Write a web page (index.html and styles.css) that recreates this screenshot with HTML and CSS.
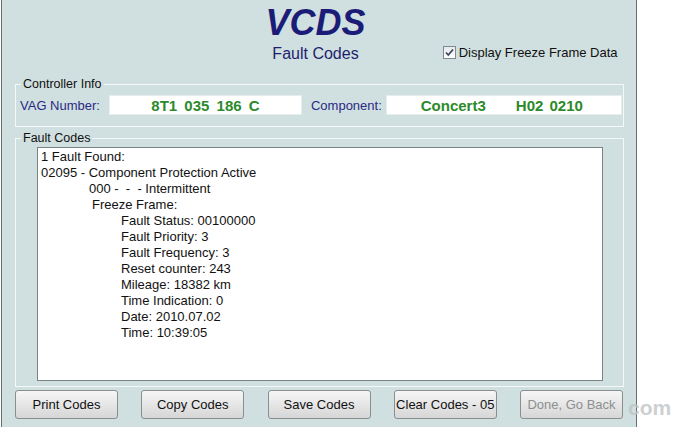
FILE: index.html
```html
<!DOCTYPE html>
<html>
<head>
<meta charset="utf-8">
<link rel="stylesheet" href="styles.css">
</head>
<body>
<div class="window">
  <div class="header">
    <div class="logo">VCDS</div>
    <div class="subrow">
      <div></div>
      <div class="subtitle">Fault Codes</div>
      <label class="check">
        <span class="box"><svg width="11" height="11" viewBox="0 0 11 11"><path d="M2 5.5 L4.3 8 L9 2.5" fill="none" stroke="#3c4660" stroke-width="1.8"/></svg></span>
        <span>Display Freeze Frame Data</span>
      </label>
    </div>
  </div>

  <fieldset class="group controller">
    <legend>Controller Info</legend>
    <div class="info-row">
      <span class="lbl">VAG Number:</span>
      <span class="field vag">8T1 035 186 C</span>
      <span class="lbl comp">Component:</span>
      <span class="field compfield"><span class="c1">Concert3</span><span class="c2">H02 0210</span></span>
    </div>
  </fieldset>

  <fieldset class="group codes">
    <legend>Fault Codes</legend>
    <div class="codes-body">
      <div class="list">
        <div>1 Fault Found:</div>
        <div>02095 - Component Protection Active</div>
        <div class="i1">000 -  -  - Intermittent</div>
        <div class="i2">Freeze Frame:</div>
        <div class="i3">Fault Status: 00100000</div>
        <div class="i3">Fault Priority: 3</div>
        <div class="i3">Fault Frequency: 3</div>
        <div class="i3">Reset counter: 243</div>
        <div class="i3">Mileage: 18382 km</div>
        <div class="i3">Time Indication: 0</div>
        <div class="i3">Date: 2010.07.02</div>
        <div class="i3">Time: 10:39:05</div>
      </div>
    </div>
  </fieldset>

  <div class="buttons">
    <button class="btn">Print Codes</button>
    <button class="btn">Copy Codes</button>
    <button class="btn">Save Codes</button>
    <button class="btn">Clear Codes - 05</button>
    <button class="btn faded">Done, Go Back</button>
  </div>
</div>
<span class="watermark">com</span>
</body>
</html>
```

FILE: styles.css
```css
html, body {
  margin: 0;
  padding: 0;
  background: #ffffff;
  font-family: "Liberation Sans", Arial, sans-serif;
}
body {
  position: relative;
  width: 683px;
  height: 427px;
  overflow: hidden;
}
.window {
  box-sizing: border-box;
  margin-left: 1px;
  width: 636px;
  height: 427px;
  background: #d0dfdf;
  border-left: 1px solid #66716f;
  border-right: 1px solid #66716f;
  padding: 5px 12px 0 13px;
  display: flex;
  flex-direction: column;
}
.header {
  display: flex;
  flex-direction: column;
}
.logo {
  text-align: center;
  font-size: 36px;
  line-height: 36px;
  font-weight: bold;
  font-style: italic;
  color: #1b1b78;
  margin-left: -8px;
}
.subrow {
  display: grid;
  grid-template-columns: 1fr auto 1fr;
  align-items: center;
  height: 20px;
  margin-top: 3px;
}
.subtitle {
  font-size: 16px;
  color: #1e1e6e;
  margin-left: -8px;
}
.check {
  justify-self: start;
  margin-left: 84px;
  display: flex;
  align-items: center;
  gap: 3px;
  font-size: 13px;
  color: #111;
  margin-top: -4px;
}
.box {
  box-sizing: border-box;
  width: 13px;
  height: 13px;
  border: 1px solid #7e8a94;
  background: linear-gradient(#e6e8ea, #ffffff);
  display: flex;
  align-items: center;
  justify-content: center;
}
.group {
  margin: 0;
  border: 1px solid #f3f8f8;
  padding: 0 1px 0 4px;
}
.group legend {
  padding: 0 2px;
  margin-left: 1px;
  font-size: 12.5px;
  line-height: 14px;
  color: #111;
}
.controller {
  margin-top: 13px;
  padding-top: 4px;
  padding-bottom: 11px;
}
.info-row {
  display: flex;
  align-items: center;
  height: 20px;
}
.lbl {
  font-size: 13px;
  color: #2a2a86;
}
.field {
  box-sizing: border-box;
  height: 20px;
  background: #ffffff;
  border: 1px solid #e6eded;
  color: #2b8a2b;
  font-weight: bold;
  font-size: 15px;
  display: flex;
  align-items: center;
}
.vag {
  width: 193px;
  margin-left: 9px;
  justify-content: center;
  word-spacing: 3px;
}
.comp {
  margin-left: 9px;
}
.compfield {
  flex: 1;
  margin-left: 4px;
}
.c1 {
  margin-left: 34px;
}
.c2 {
  margin-left: 30px;
  word-spacing: 2px;
}
.codes {
  margin-top: 4px;
  padding: 2px 1px 5px 4px;
}
.codes-body {
  padding: 0 19px 0 17px;
}
.list {
  box-sizing: border-box;
  height: 234px;
  background: #ffffff;
  border: 1px solid #7a8484;
  padding: 1px 3px;
  font-size: 13px;
  line-height: 16px;
  color: #111;
}
.list div {
  white-space: pre;
}
.i1 { padding-left: 48px; }
.i2 { padding-left: 51px; }
.i3 { padding-left: 80px; }
.buttons {
  display: flex;
  justify-content: space-between;
  margin-top: 3px;
  padding-right: 1px;
}
.btn {
  box-sizing: border-box;
  width: 103px;
  height: 29px;
  border: 1px solid #8a8e8e;
  border-radius: 3px;
  background: linear-gradient(#f6f6f6, #e6e6e6 50%, #d6d6d6);
  font-family: "Liberation Sans", Arial, sans-serif;
  font-size: 13px;
  color: #111;
  padding: 0;
  white-space: nowrap;
  overflow: hidden;
}
.faded {
  color: #8c9090;
}
.watermark {
  position: absolute;
  left: 628px;
  top: 396px;
  font-size: 21px;
  font-weight: bold;
  color: rgba(190, 195, 195, 0.8);
}
```
